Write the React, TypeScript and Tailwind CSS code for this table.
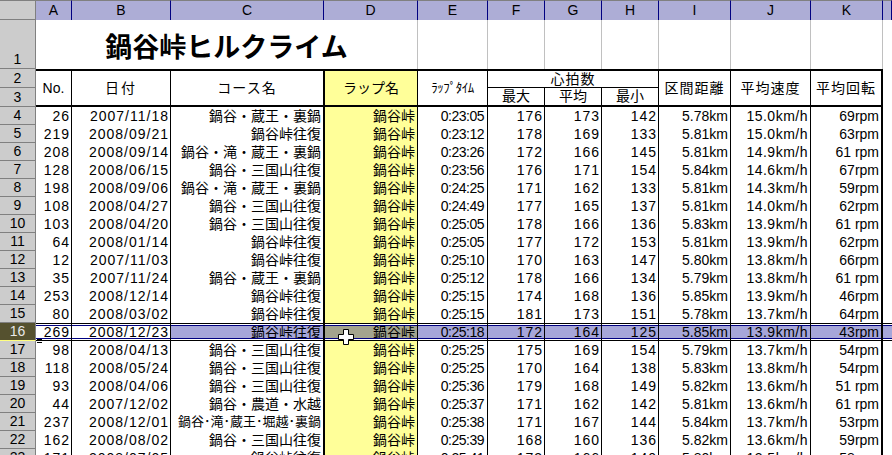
const GRID = "grid grid-cols-[36px_36px_99px_153px_94px_70px_57px_57px_57px_72px_80px_72px_1fr]"
const FONT = "font-['Liberation_Sans','Noto_Sans_CJK_JP',sans-serif]"

type Row = [number, string, string, string, string, string, string, string, string, string, string]

const colCls = [
  "tracking-[1px] pr-[1px]",
  "tracking-[1px] pr-[1px]",
  "pr-[2px]",
  "pr-[2px]",
  "tracking-[-0.5px] pr-[3px]",
  "tracking-[1px] pr-[1px]",
  "tracking-[1px] pr-[1px]",
  "tracking-[1px] pr-[1px]",
  "pr-[2px]",
  "tracking-[0.5px] pr-[2px]",
  "pr-[2px]",
]

const rows: Row[] = [
  [26, "2007/11/18", "鍋谷・蔵王・裏鍋", "0:23:05", "176", "173", "142", "5.78km", "15.0km/h", "69rpm", ""],
  [219, "2008/09/21", "鍋谷峠往復", "0:23:12", "178", "169", "133", "5.81km", "15.0km/h", "63rpm", ""],
  [208, "2008/09/14", "鍋谷・滝・蔵王・裏鍋", "0:23:26", "172", "166", "145", "5.81km", "14.9km/h", "61 rpm", ""],
  [128, "2008/06/15", "鍋谷・三国山往復", "0:23:56", "176", "171", "154", "5.84km", "14.6km/h", "67rpm", ""],
  [198, "2008/09/06", "鍋谷・滝・蔵王・裏鍋", "0:24:25", "171", "162", "133", "5.81km", "14.3km/h", "59rpm", ""],
  [108, "2008/04/27", "鍋谷・三国山往復", "0:24:49", "177", "165", "137", "5.81km", "14.0km/h", "62rpm", ""],
  [103, "2008/04/20", "鍋谷・三国山往復", "0:25:05", "178", "166", "136", "5.83km", "13.9km/h", "61 rpm", ""],
  [64, "2008/01/14", "鍋谷峠往復", "0:25:05", "177", "172", "153", "5.81km", "13.9km/h", "62rpm", ""],
  [12, "2007/11/03", "鍋谷峠往復", "0:25:10", "170", "163", "147", "5.80km", "13.8km/h", "66rpm", ""],
  [35, "2007/11/24", "鍋谷・蔵王・裏鍋", "0:25:12", "178", "166", "134", "5.79km", "13.8km/h", "61 rpm", ""],
  [253, "2008/12/14", "鍋谷峠往復", "0:25:15", "174", "168", "136", "5.85km", "13.9km/h", "46rpm", ""],
  [80, "2008/03/02", "鍋谷峠往復", "0:25:15", "181", "173", "151", "5.78km", "13.7km/h", "64rpm", ""],
  [269, "2008/12/23", "鍋谷峠往復", "0:25:18", "172", "164", "125", "5.85km", "13.9km/h", "43rpm", "sel"],
  [98, "2008/04/13", "鍋谷・三国山往復", "0:25:25", "175", "169", "154", "5.79km", "13.7km/h", "54rpm", ""],
  [118, "2008/05/24", "鍋谷・三国山往復", "0:25:25", "170", "164", "138", "5.83km", "13.8km/h", "54rpm", ""],
  [93, "2008/04/06", "鍋谷・三国山往復", "0:25:36", "179", "168", "149", "5.82km", "13.6km/h", "51 rpm", ""],
  [44, "2007/12/02", "鍋谷・農道・水越", "0:25:37", "171", "162", "142", "5.81km", "13.6km/h", "61 rpm", ""],
  [237, "2008/12/01", "鍋谷･滝･蔵王･堀越･裏鍋", "0:25:38", "171", "167", "144", "5.84km", "13.7km/h", "53rpm", "small"],
  [162, "2008/08/02", "鍋谷・三国山往復", "0:25:39", "168", "160", "136", "5.82km", "13.6km/h", "59rpm", ""],
  [171, "2008/07/05", "鍋谷峠往復", "0:25:41", "173", "166", "140", "5.80km", "13.5km/h", "58rpm", ""],
]

function DataRow({ r, n }: { r: Row; n: number }) {
  const [no, date, course, time, mx, av, mn, dist, spd, rpm, flag] = r
  const sel = flag === "sel"
  const vals = [String(no), date, course, "鍋谷峠", time, mx, av, mn, dist, spd, rpm]

  if (sel) {
    return (
      <div className={`${GRID} h-[18px]`}>
        <div className="bg-[#55512f] border-r border-[#808080] border-b border-b-[#ffff80] text-[#e8e8e8] text-center text-[14px] leading-[17px]">
          {n}
        </div>
        {vals.map((v, i) => (
          <div
            key={i}
            className={`border-y border-black bg-white py-px ${i === 3 ? "border-l border-l-black" : ""} ${i === 10 ? "border-r-2 border-r-black" : "border-r border-r-black"}`}
          >
            <div
              className={`h-full border-y border-[#000080] text-right text-[14px] leading-[12px] whitespace-nowrap overflow-hidden ${colCls[i]} ${
                i < 2 ? "bg-white" : i === 3 ? "bg-[#a3a38e]" : "bg-[#a6a6d9]"
              }`}
            >
              {v}
            </div>
          </div>
        ))}
        <div className="border-y border-black bg-white py-px">
          <div className="h-full border-y border-[#000080] bg-[#a6a6d9]" />
        </div>
      </div>
    )
  }

  return (
    <div className={`${GRID} h-[18px]`}>
      <div className="bg-[#cccccc] border-r border-b border-[#808080] text-center text-[14px] leading-[17px]">{n}</div>
      {vals.map((v, i) => (
        <div
          key={i}
          className={`text-right leading-[18px] whitespace-nowrap overflow-hidden ${colCls[i]} ${
            i === 2 && flag === "small" ? "text-[13px]" : "text-[14px]"
          } ${i === 3 ? "bg-[#ffff99] border-l border-l-black" : "bg-white"} ${
            i === 10 ? "border-r-2 border-r-black" : "border-r border-r-black"
          }`}
        >
          {v}
        </div>
      ))}
      <div className="bg-white" />
    </div>
  )
}

export default function App() {
  const letters = ["A", "B", "C", "D", "E", "F", "G", "H", "I", "J", "K", ""]
  return (
    <div className={`relative w-[892px] h-[455px] overflow-hidden bg-white text-black ${FONT}`}>
      {/* column letters */}
      <div className={`${GRID} h-[20px]`}>
        <div className="bg-[#cccccc] border-r border-b border-[#808080] border-t border-t-[#808080]" />
        {letters.map((l, i) => (
          <div
            key={i}
            className="bg-[#adadd6] border-r border-[#000080] border-t border-t-[#808080] text-center text-[14px] leading-[19px]"
          >
            {l}
          </div>
        ))}
      </div>

      {/* row 1 title */}
      <div className={`${GRID} h-[49px]`}>
        <div className="bg-[#cccccc] border-r border-b border-[#808080] flex items-end justify-center text-[14px] leading-[18px]">
          1
        </div>
        <div className="col-span-4 border-r border-[#c0c0c0] flex items-center justify-center pt-[2px]">
          <span className="font-['Noto_Sans_CJK_JP',sans-serif] font-bold text-[27px] leading-none">
            鍋谷峠ヒルクライム
          </span>
        </div>
        {[0, 1, 2, 3, 4, 5, 6].map((i) => (
          <div key={i} className="border-r border-[#c0c0c0]" />
        ))}
        <div />
      </div>

      {/* header rows 2-3 */}
      <div className={`${GRID} grid-rows-[19px_19px] text-[14px]`}>
        <div className="bg-[#cccccc] border-r border-b border-[#808080] text-center leading-[18px]">2</div>
        <div className="row-span-2 border-t-2 border-b-2 border-r border-black flex items-center justify-center">No.</div>
        <div className="row-span-2 border-t-2 border-b-2 border-r border-black flex items-center justify-center tracking-[2px]">日付</div>
        <div className="row-span-2 border-t-2 border-b-2 border-r border-black flex items-center justify-center tracking-[1px]">コース名</div>
        <div className="row-span-2 border-t-2 border-b-2 border-r border-l border-black bg-[#ffff99] flex items-center justify-center">ラップ名</div>
        <div className="row-span-2 border-t-2 border-b-2 border-r border-black flex items-center justify-center text-[13px] tracking-[-0.5px]">ﾗｯﾌﾟﾀｲﾑ</div>
        <div className="col-span-3 border-t-2 border-b border-r border-black text-center leading-[16px] tracking-[1px]">心拍数</div>
        <div className="row-span-2 border-t-2 border-b-2 border-r border-black flex items-center justify-center tracking-[1px]">区間距離</div>
        <div className="row-span-2 border-t-2 border-b-2 border-r border-black flex items-center justify-center tracking-[1px]">平均速度</div>
        <div className="row-span-2 border-t-2 border-b-2 border-r-2 border-black flex items-center justify-center tracking-[1px]">平均回転</div>
        <div className="row-span-2" />
        <div className="bg-[#cccccc] border-r border-b border-[#808080] text-center leading-[18px]">3</div>
        <div className="border-b-2 border-r border-black text-center leading-[17px]">最大</div>
        <div className="border-b-2 border-r border-black text-center leading-[17px]">平均</div>
        <div className="border-b-2 border-r border-black text-center leading-[17px]">最小</div>
      </div>

      {/* data */}
      {rows.map((r, i) => (
        <DataRow key={i} r={r} n={i + 4} />
      ))}

      {/* fill-handle marker */}
      <div className="absolute left-[37px] top-[339px] w-[5px] h-[4px] bg-black border-y border-black">
        <div className="h-px bg-white mt-px" />
      </div>

      {/* mouse cursor */}
      <svg className="absolute left-[338px] top-[329px]" width="16" height="16" viewBox="0 0 16 16">
        <path d="M5.5 0.5h5v5h5v5h-5v5h-5v-5h-5v-5h5z" fill="#ffffff" stroke="#000000" strokeWidth="1" />
      </svg>
    </div>
  )
}
